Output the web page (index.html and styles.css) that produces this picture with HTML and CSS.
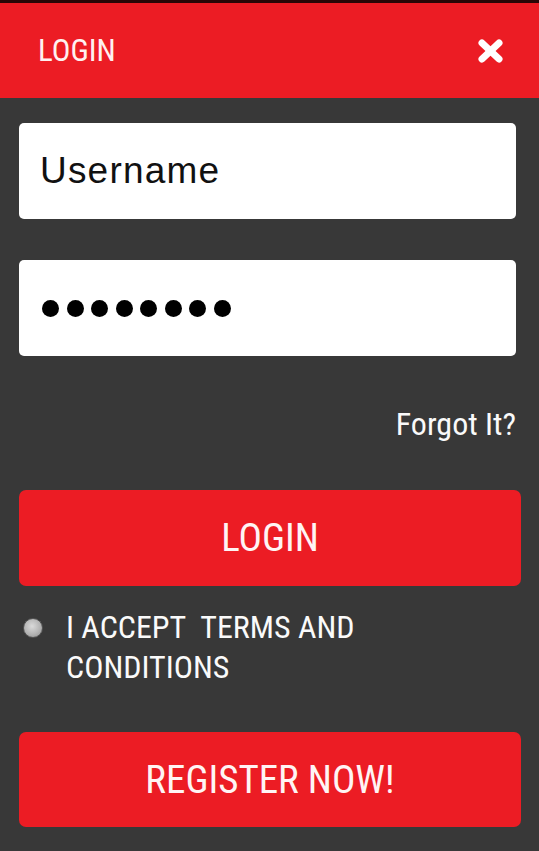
FILE: index.html
```html
<html>
<head>
<meta charset="utf-8" />
<title>Login</title>
<link rel="stylesheet" href="styles.css">
</head>
<body>
<div class="topline"></div>
<div class="header">
	<span class="title">LOGIN</span>
	<svg class="close" width="25" height="24" viewBox="0 0 25 24">
		<line x1="4" y1="4" x2="21" y2="20" />
		<line x1="21" y1="4" x2="4" y2="20" />
	</svg>
</div>
<div class="content">
	<div class="field">Username</div>
	<div class="field secret">
		<span class="dot"></span><span class="dot"></span><span class="dot"></span><span class="dot"></span>
		<span class="dot"></span><span class="dot"></span><span class="dot"></span><span class="dot"></span>
	</div>
	<div class="forgot">Forgot It?</div>
	<div class="button login">LOGIN</div>
	<div class="terms">
		<span class="radio"></span>
		<span class="label">I ACCEPT&nbsp; TERMS AND CONDITIONS</span>
	</div>
	<div class="button register">REGISTER NOW!</div>
</div>
</body>
</html>
```

FILE: styles.css
```css
body {
	margin: 0;
	background-color: #383838;
	color: #fafafa;
	font-family: "Roboto Condensed", "Liberation Sans Narrow", "DejaVu Sans Condensed", Roboto, sans-serif;
	font-stretch: condensed;
}

.topline {
	height: 3px;
	background-color: #2a0606;
}

.header {
	height: 95px;
	background-color: #ec1c24;
	display: flex;
	align-items: center;
	justify-content: space-between;
	padding: 0 36px 0 38px;
}

.title {
	font-size: 31px;
	color: #fff0f0;
}

.close line {
	stroke: #ffffff;
	stroke-width: 7;
	stroke-linecap: round;
}

.content {
	padding: 25px 18px 0 19px;
}

.field {
	height: 96px;
	margin-right: 5px;
	background-color: #ffffff;
	border-radius: 5px;
	display: flex;
	align-items: center;
	padding-left: 21px;
	color: #111111;
	font-family: "Liberation Sans", Arial, sans-serif;
	font-stretch: normal;
	font-size: 37px;
	letter-spacing: 1.2px;
}

.field + .field {
	margin-top: 41px;
}

.secret {
	gap: 7.5px;
	padding-left: 23px;
}

.dot {
	width: 17px;
	height: 17px;
	border-radius: 50%;
	background-color: #000000;
}

.forgot {
	margin-top: 48px;
	margin-right: 5px;
	text-align: right;
	font-size: 32px;
	line-height: 40px;
}

.button {
	height: 96px;
	border-radius: 7px;
	background-color: #ec1c24;
	display: flex;
	align-items: center;
	justify-content: center;
	font-size: 39px;
	color: #fff4f4;
}

.login {
	margin-top: 46px;
}

.terms {
	margin-top: 21px;
	display: flex;
	align-items: flex-start;
}

.radio {
	flex: none;
	width: 18px;
	height: 18px;
	margin: 11px 0 0 4px;
	border: 1.5px solid #555555;
	border-radius: 50%;
	background: radial-gradient(circle at 45% 40%, #dadada, #b4b4b4 55%, #8e8e8e);
}

.label {
	width: 300px;
	margin-left: 23px;
	font-size: 32px;
	line-height: 40px;
}

.register {
	margin-top: 45px;
	height: 95px;
}
```
